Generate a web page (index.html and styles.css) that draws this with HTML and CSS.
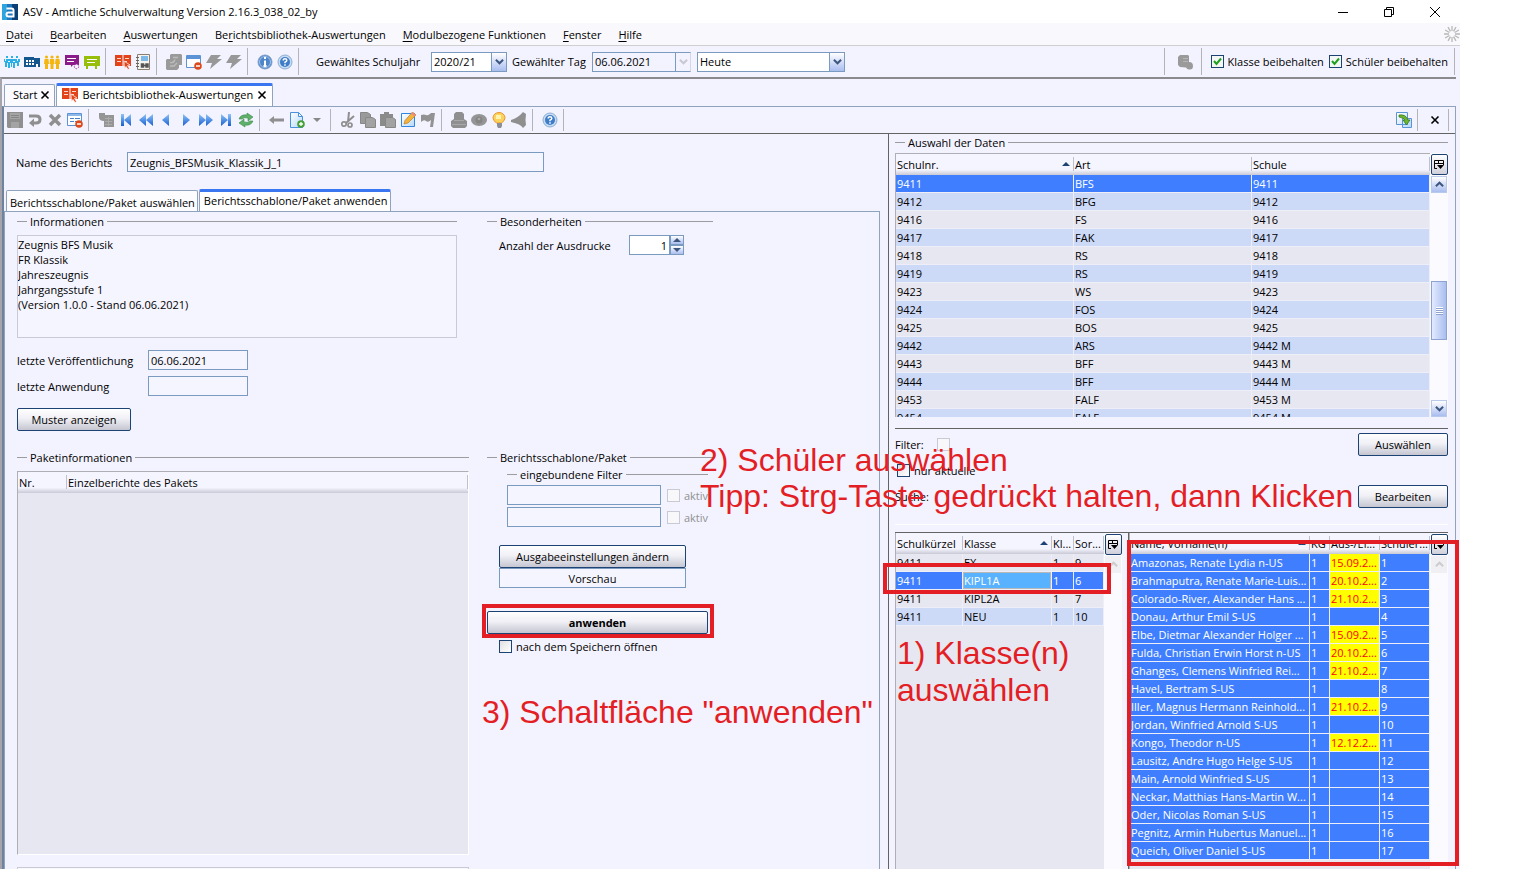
FILE: index.html
```html
<!DOCTYPE html>
<html lang="de">
<head>
<meta charset="utf-8">
<title>ASV - Amtliche Schulverwaltung</title>
<link rel="stylesheet" href="styles.css">
</head>
<body>
<svg class="defs" aria-hidden="true">
  <defs>
    <linearGradient id="gb" x1="0" y1="0" x2="0" y2="1"><stop offset="0" stop-color="#8cc4f8"/><stop offset="1" stop-color="#1b5fd0"/></linearGradient>
    <linearGradient id="gp" x1="0" y1="0" x2="1" y2="1"><stop offset="0" stop-color="#ffffff"/><stop offset="1" stop-color="#b5d8fb"/></linearGradient>
    <symbol id="logo" viewBox="0 0 16 16"><path fill="#0a3f78" d="M0 0h16v16H0z"/><path fill="#2fa5e0" d="M0 0h5v16H0z"/><path fill="#1d78bd" d="M5 0h5v16H5z"/><path fill="none" stroke="#fff" stroke-width="2" d="M4.500 4.500h5q2 0 2 2v6H6.500q-2 0-2-2t2-2h5"/></symbol>
    <symbol id="people" viewBox="0 0 16 16"><g fill="#2bb0e6"><path d="M2 2h2v2H2zM7 2h2v2H7zM12 2h2v2h-2zM4 5h2v2H4zM9 5h2v2H9zM0 5h1v2h1V5h2v4H3v4H1V8H0zM6 5h3v4H8v4H7V9H6zM11 5h2v2h1V5h2v3h-1v4h-2V9h-2zM4 8h2v6H4zM9 8h2v6H9z"/></g></symbol>
    <symbol id="school" viewBox="0 0 16 16"><path fill="#14578f" d="M0 3h10v1h6v9H0z"/><path fill="#fff" d="M2 6h2v2H2zM5 6h2v2H5zM8 6h2v2H8zM2 9h2v2H2zM5 9h2v2H5zM8 9h2v2H8zM12 10h2v3h-2z"/></symbol>
    <symbol id="adults" viewBox="0 0 16 16"><g fill="#f5b70f"><circle cx="2.500" cy="3" r="1.600"/><circle cx="8" cy="3" r="1.600"/><circle cx="13.500" cy="3" r="1.600"/><path d="M.5 5h4l.5 5H4v5H1v-5H0zM6 5h4l.5 5h-1v5h-3v-5h-1zM11.500 5h4l.5 5h-1v5h-3v-5h-1z"/></g></symbol>
    <symbol id="board1" viewBox="0 0 16 16"><path fill="#8b1a8b" d="M1 1h14v10H9l-2 2v-2H1z"/><path stroke="#fff" d="M3 4.500h9M3 7.500h7"/><circle cx="12.500" cy="12.500" r="2.200" fill="#f3f3ff" stroke="#a83ba8" stroke-dasharray="1.500 1"/></symbol>
    <symbol id="board2" viewBox="0 0 16 16"><path fill="#98be0c" d="M0 2h16v10H0zM2 12h2v3H2zM11 12h2v3h-2z"/><path stroke="#fff" d="M3 5.500h10M3 8.500h8"/></symbol>
    <symbol id="book" viewBox="0 0 16 16"><path fill="#e2431b" d="M0 1h7.500v11H0zM8.500 1H16v11H8.500z"/><path stroke="#ffd9cc" d="M2 4.500h4M2 7.500h4M10 4.500h4M10 7.500h2"/><path fill="#e2431b" stroke="#fff" stroke-width=".7" d="m9 7 6 4-2.500.500 2 3-1.500 1-2-3-1.500 2z"/></symbol>
    <symbol id="binder" viewBox="0 0 16 16"><path fill="#f5f3ee" stroke="#8a7e70" d="M2.500.5h12v15h-12z"/><path stroke="#666" d="M1 3.500h3M1 6.500h3M1 9.500h3M1 12.500h3"/><path fill="#7cb8e8" d="M6 2h7v5H6z"/><path stroke="#555" fill="none" stroke-width="1.500" d="M6 11.500h7M6.500 10v3h2v-3zM11 10v3h2v-3z"/></symbol>
    <symbol id="folder" viewBox="0 0 16 16"><path fill="#9a9a9a" d="M5 0h10l1 1v10h-3v3l-2 2H1l-1-1V6l1-1h3V1z"/><path fill="none" stroke="#bcbcbc" stroke-width="1.300" d="M4 8.500q4 1 5-3M4 12h4l3-3M7 3.500h5"/></symbol>
    <symbol id="winminus" viewBox="0 0 16 16"><path fill="#fff" stroke="#5b93d6" d="M.5 1.500h14v12H.5z"/><path fill="#5b93d6" d="M1 2h13v3H1z"/><circle cx="12" cy="12" r="3.800" fill="#dc4a1c"/><path stroke="#fff" stroke-width="1.500" d="M10 12h4"/></symbol>
    <symbol id="formminus" viewBox="0 0 16 16"><path fill="#fff" stroke="#5b93d6" d="M.5 1.500h14v12H.5z"/><path fill="#8db8e8" d="M1 2h13v2H1z"/><path stroke="#4a80c6" d="M3 6.500h4M8 6.500h5M3 9.500h4M8 9.500h3"/><circle cx="12" cy="12" r="3.800" fill="#dc4a1c"/><path stroke="#fff" stroke-width="1.500" d="M10 12h4"/></symbol>
    <symbol id="bolt" viewBox="0 0 16 16"><path fill="#989898" d="M5 1h10l-4 4h5L4 15l2-6H0z"/></symbol>
    <symbol id="info" viewBox="0 0 16 16"><circle cx="8" cy="8" r="7" fill="#4f86ca" stroke="#7f9fc4"/><circle cx="8" cy="8" r="5.500" fill="none" stroke="#9fc4ee"/><path stroke="#fff" stroke-width="2" d="M8 3v2M8 6.500v5M6.500 12h3"/></symbol>
    <symbol id="help" viewBox="0 0 16 16"><circle cx="8" cy="8" r="7" fill="#c6dcf2" stroke="#8eaed2"/><circle cx="8" cy="8" r="5" fill="#3f7cc8"/><path stroke="#fff" stroke-width="1.500" fill="none" d="M6.200 6.500q0-1.800 1.800-1.800t1.800 1.600Q9.800 7.500 8 8.200v1M8 10.300v1.500"/></symbol>
    <symbol id="server" viewBox="0 0 16 16"><path fill="#9a9a9a" d="M3 1h8l1 1v6q4 0 4 4t-4 3.500q-2 0-3-2l-6-.5-2-2V3z"/><path stroke="#b5b5b5" d="M6 4.500h5M6 7.500h5"/></symbol>
    <symbol id="save" viewBox="0 0 16 16"><path fill="#8f8f8f" d="M0 0h16v16H1l-1-1z"/><path fill="#a4a4a4" d="M3 1h10v6H3zM4 10h8v6H4z"/><path stroke="#858585" d="M4 3.500h8M4 5.500h8"/></symbol>
    <symbol id="undo" viewBox="0 0 16 16"><path fill="none" stroke="#8f8f8f" stroke-width="3" d="M2 4h7q4 0 4 3.500T9 11H5"/><path fill="#8f8f8f" d="M7 6.500V15l-5-4z"/></symbol>
    <symbol id="cross" viewBox="0 0 16 16"><path stroke="#8f8f8f" stroke-width="3.500" d="m3 3 10 10M13 3 3 13"/></symbol>
    <symbol id="multi" viewBox="0 0 16 16"><path fill="#959595" d="M1 1h6v2h9v12H6V9q-5 0-5-4z"/><path stroke="#ababab" d="M7 6.500h7M7 9.500h7M7 12.500h7M10.500 5v9"/></symbol>
    <symbol id="first" viewBox="0 0 16 16"><path fill="url(#gb)" d="M3 2h3v12H3zM13 2v12L6 8z"/></symbol>
    <symbol id="rew" viewBox="0 0 16 16"><path fill="url(#gb)" d="M8 2v12L1 8zM15 2v12L8 8z"/></symbol>
    <symbol id="prev" viewBox="0 0 16 16"><path fill="url(#gb)" d="M11 2v12L4 8z"/></symbol>
    <symbol id="arrowl" viewBox="0 0 16 16"><path fill="#909090" d="m0 8 5-4v2.500h10v3H5V12z"/></symbol>
    <symbol id="refresh" viewBox="0 0 16 16"><path fill="#5fb069" stroke="#3d8a4a" stroke-width=".6" d="M1 7q2-5 8-4V1l6 4-5 4V6Q6 5 4 7zM15 9q-2 5-8 4v2l-6-4 5-4v3q4 1 6-1z"/></symbol>
    <symbol id="newdoc" viewBox="0 0 16 16"><path fill="url(#gp)" stroke="#4a90dc" d="M1.500.5h8l4 4v11h-12z"/><path fill="#fff" stroke="#4a90dc" d="M9.500.5v4h4z"/><circle cx="12" cy="12" r="3.800" fill="#46a036"/><path stroke="#fff" stroke-width="1.300" d="M10 12h4M12 10v4"/></symbol>
    <symbol id="down" viewBox="0 0 16 16"><path fill="#888" d="M4 6h8l-4 4z"/></symbol>
    <symbol id="cut" viewBox="0 0 16 16"><path stroke="#8f8f8f" stroke-width="2" fill="none" d="M9 0 8 10M14 4 6 11"/><circle cx="4" cy="12" r="2.200" fill="none" stroke="#8f8f8f" stroke-width="1.700"/><circle cx="10" cy="13" r="2" fill="none" stroke="#8f8f8f" stroke-width="1.700"/></symbol>
    <symbol id="copy" viewBox="0 0 16 16"><path fill="#9a9a9a" stroke="#878787" d="M.5.5h7l3 2v9H.5z"/><path fill="#a2a2a2" stroke="#878787" d="M5.500 5.500h7l3 2v8h-10z"/></symbol>
    <symbol id="paste" viewBox="0 0 16 16"><path fill="#8b8b8b" d="M0 2h4V0h5v2h4v12H0z"/><path fill="#a2a2a2" stroke="#878787" d="M5.500 5.500h7l3 2v8h-10z"/></symbol>
    <symbol id="edit" viewBox="0 0 16 16"><path fill="url(#gp)" stroke="#2f86e0" d="M1.500 1.500h13v13h-13z"/><path fill="#f3b23a" stroke="#b07018" stroke-width=".6" d="m4 12 1-3.500L12.500 0 16 3 8 11z"/><path fill="#e88a80" d="m12.500 0 3.500 3-1.500 1.500L11 1.500z"/></symbol>
    <symbol id="flag" viewBox="0 0 16 16"><path fill="#929292" d="M1 3q3-1 5 0t5-2h4l-2 14h-3l1-7q-3 3-5 1T1 10z"/></symbol>
    <symbol id="print" viewBox="0 0 16 16"><path fill="#8f8f8f" d="M5 0h6l2 2v5l3 2v5l-2 2H2l-2-2V9l3-2V2z"/><path stroke="#a8a8a8" d="M3 8.500h10M1 12.500h14"/></symbol>
    <symbol id="eye" viewBox="0 0 16 16"><ellipse cx="8" cy="8" rx="8" ry="6" fill="#959595"/><circle cx="8" cy="8" r="3.500" fill="#858585"/><circle cx="8" cy="7" r="1.300" fill="#aaa"/></symbol>
    <symbol id="bulb" viewBox="0 0 16 16"><path fill="#fbd25b" stroke="#e8962e" d="M8 .5a6 5.200 0 0 1 6 5.200q0 3-3.500 5.300h-5Q2 8.700 2 5.700A6 5.200 0 0 1 8 .5z"/><path fill="#fff3b0" d="M5 3h5v4H5z"/><path fill="#8a8f98" d="M6 11h5v3l-1 2H7l-1-2z"/></symbol>
    <symbol id="bell" viewBox="0 0 16 16"><path fill="#8f8f8f" d="m12 0 3 2q-1 6 0 11l-3 3q-2-4-12-6V8q7-2 12-8z"/></symbol>
    <symbol id="swap" viewBox="0 0 16 16"><path fill="url(#gp)" stroke="#5a94d4" d="M.5.5h11v12H.5zM6.500 6.500h9v9h-9z"/><path fill="#6cb52a" stroke="#2f6f1c" stroke-width=".7" d="M3 3q7-1 9 5h2l-3.500 5L7 8h2Q8 6 3 5z"/></symbol>
    <symbol id="spin" viewBox="0 0 16 16"><path stroke="#b8b8b8" stroke-width="1.300" d="M8 0v5M8 11v5M0 8h5M11 8h5M4 1.100l2.500 4.300M9.500 10.600 12 14.900M1.100 4l4.300 2.500M10.600 9.500l4.300 2.500M12 1.100 9.500 5.400M6.500 10.600 4 14.900M14.900 4l-4.300 2.500M5.400 9.500 1.100 12"/></symbol>
    <symbol id="x" viewBox="0 0 10 10"><path stroke="#000" stroke-width="1.600" d="m1.500 1.500 7 7M8.500 1.500l-7 7"/></symbol>
    <symbol id="colsel" viewBox="0 0 10 10"><path fill="none" stroke="#000" d="M3 8.500H.5v-8h9V5M.5 3.500h9M4.500 0v4"/><path d="M3 5h7L6.500 9z"/></symbol>
    <symbol id="cu" viewBox="0 0 10 10"><path fill="none" stroke="currentColor" stroke-width="2.200" d="m1 7 4-4 4 4"/></symbol>
    <symbol id="cd" viewBox="0 0 10 10"><path fill="none" stroke="currentColor" stroke-width="2.200" d="m1 3 4 4 4-4"/></symbol>
    <symbol id="tri" viewBox="0 0 8 4"><path fill="currentColor" d="M0 4 4 0l4 4z"/></symbol>
    <symbol id="trid" viewBox="0 0 8 4"><path fill="currentColor" d="m0 0 4 4 4-4z"/></symbol>
  </defs>
</svg>

<div class="app">
  <header class="titlebar">
    <svg class="i"><use href="#logo"/></svg>
    <h1>ASV - Amtliche Schulverwaltung Version 2.16.3_038_02_by</h1>
    <div class="winbtns">
      <button aria-label="Minimieren"><svg viewBox="0 0 12 12"><path stroke="#000" d="M1 6.500h10"/></svg></button>
      <button aria-label="Wiederherstellen"><svg viewBox="0 0 12 12"><path fill="none" stroke="#000" d="M1.500 3.500h7v7h-7zM3.500 3.500v-2h7v7h-2"/></svg></button>
      <button aria-label="Schließen"><svg viewBox="0 0 12 12"><path stroke="#000" d="m1 1 10 10M11 1 1 11"/></svg></button>
    </div>
  </header>
  <nav class="menubar">
    <a href="#"><u>D</u>atei</a><a href="#"><u>B</u>earbeiten</a><a href="#"><u>A</u>uswertungen</a><a href="#">Be<u>r</u>ichtsbibliothek-Auswertungen</a><a href="#"><u>M</u>odulbezogene Funktionen</a><a href="#"><u>F</u>enster</a><a href="#"><u>H</u>ilfe</a>
    <svg class="i end"><use href="#spin"/></svg>
  </nav>
  <div class="toolbar main">
    <button aria-label="Schüler"><svg class="i"><use href="#people"/></svg></button>
    <button aria-label="Schule"><svg class="i"><use href="#school"/></svg></button>
    <button aria-label="Lehrkräfte"><svg class="i"><use href="#adults"/></svg></button>
    <button aria-label="Unterricht"><svg class="i"><use href="#board1"/></svg></button>
    <button aria-label="Klassen"><svg class="i"><use href="#board2"/></svg></button>
    <span class="sep"></span>
    <button aria-label="Berichte"><svg class="i"><use href="#book"/></svg></button>
    <button aria-label="Ordner"><svg class="i"><use href="#binder"/></svg></button>
    <span class="sep"></span>
    <button aria-label="Module"><svg class="i"><use href="#folder"/></svg></button>
    <button aria-label="Fenster schließen"><svg class="i"><use href="#winminus"/></svg></button>
    <button aria-label="Aktion 1"><svg class="i"><use href="#bolt"/></svg></button>
    <button aria-label="Aktion 2"><svg class="i"><use href="#bolt"/></svg></button>
    <span class="sep"></span>
    <button aria-label="Info"><svg class="i"><use href="#info"/></svg></button>
    <button aria-label="Hilfe"><svg class="i"><use href="#help"/></svg></button>
    <span class="sep"></span>
    <label class="yearlabel" for="year">Gewähltes Schuljahr</label>
    <span class="combo year"><select id="year"><option>2020/21</option></select><span class="arrow"><svg><use href="#cd"/></svg></span></span>
    <label class="daylabel" for="day">Gewählter Tag</label>
    <span class="combo day off"><input id="day" value="06.06.2021" readonly><span class="arrow"><svg><use href="#cd"/></svg></span></span>
    <span class="combo today"><select aria-label="Tag"><option>Heute</option></select><span class="arrow"><svg><use href="#cd"/></svg></span></span>
    <span class="grow"></span>
    <span class="sep"></span>
    <button aria-label="Server"><svg class="i"><use href="#server"/></svg></button>
    <span class="sep"></span>
    <label class="check"><input type="checkbox" checked>Klasse beibehalten</label>
    <label class="check"><input type="checkbox" checked>Schüler beibehalten</label>
    <span class="sep last"></span>
  </div>

  <div class="workspace">
    <div class="tabs">
      <div class="tab"><a href="#">Start</a><button aria-label="Start schließen"><svg class="x"><use href="#x"/></svg></button></div>
      <div class="tab active"><svg class="i"><use href="#book"/></svg><a href="#">Berichtsbibliothek-Auswertungen</a><button aria-label="Auswertungen schließen"><svg class="x"><use href="#x"/></svg></button></div>
    </div>
    <div class="module">
      <div class="toolbar sub">
        <button aria-label="Speichern"><svg class="i"><use href="#save"/></svg></button>
        <button aria-label="Rückgängig"><svg class="i"><use href="#undo"/></svg></button>
        <button aria-label="Löschen"><svg class="i"><use href="#cross"/></svg></button>
        <button aria-label="Formular schließen"><svg class="i"><use href="#formminus"/></svg></button>
        <span class="sep"></span>
        <button aria-label="Mehrfach"><svg class="i"><use href="#multi"/></svg></button>
        <button aria-label="Erster"><svg class="i"><use href="#first"/></svg></button>
        <button aria-label="Zurückspulen"><svg class="i"><use href="#rew"/></svg></button>
        <button aria-label="Vorheriger"><svg class="i"><use href="#prev"/></svg></button>
        <button aria-label="Nächster"><svg class="i flip"><use href="#prev"/></svg></button>
        <button aria-label="Vorspulen"><svg class="i flip"><use href="#rew"/></svg></button>
        <button aria-label="Letzter"><svg class="i flip"><use href="#first"/></svg></button>
        <button aria-label="Aktualisieren"><svg class="i"><use href="#refresh"/></svg></button>
        <span class="sep"></span>
        <button aria-label="Zurück"><svg class="i"><use href="#arrowl"/></svg></button>
        <button aria-label="Neu"><svg class="i"><use href="#newdoc"/></svg></button>
        <button aria-label="Neu Optionen"><svg class="i"><use href="#down"/></svg></button>
        <span class="sep"></span>
        <button aria-label="Ausschneiden"><svg class="i"><use href="#cut"/></svg></button>
        <button aria-label="Kopieren"><svg class="i"><use href="#copy"/></svg></button>
        <button aria-label="Einfügen"><svg class="i"><use href="#paste"/></svg></button>
        <button aria-label="Bearbeiten"><svg class="i"><use href="#edit"/></svg></button>
        <button aria-label="Markieren"><svg class="i"><use href="#flag"/></svg></button>
        <span class="sep"></span>
        <button aria-label="Drucken"><svg class="i"><use href="#print"/></svg></button>
        <button aria-label="Ansicht"><svg class="i"><use href="#eye"/></svg></button>
        <button aria-label="Tipp"><svg class="i"><use href="#bulb"/></svg></button>
        <button aria-label="Hinweis"><svg class="i"><use href="#bell"/></svg></button>
        <span class="sep"></span>
        <button aria-label="Hilfe"><svg class="i"><use href="#help"/></svg></button>
        <span class="sep"></span>
        <span class="grow"></span>
        <button aria-label="Tauschen"><svg class="i"><use href="#swap"/></svg></button>
        <span class="sep"></span>
        <button aria-label="Modul schließen"><svg class="x"><use href="#x"/></svg></button>
        <span class="sep last"></span>
      </div>

      <div class="split">
        <main class="left">
          <div class="namerow"><label for="rname">Name des Berichts</label><input id="rname" value="Zeugnis_BFSMusik_Klassik_J_1" readonly></div>
          <div class="subtabs"><button>Berichtsschablone/Paket auswählen</button><button class="active">Berichtsschablone/Paket anwenden</button></div>
          <div class="panel">
            <section class="infos">
              <h2 class="legend">Informationen</h2>
              <textarea aria-label="Informationen" readonly>Zeugnis BFS Musik
FR Klassik
Jahreszeugnis
Jahrgangsstufe 1
(Version 1.0.0 - Stand 06.06.2021)</textarea>
              <div class="daterow"><label for="pub">letzte Veröffentlichung</label><input id="pub" value="06.06.2021" readonly></div>
              <div class="daterow"><label for="use">letzte Anwendung</label><input id="use" readonly></div>
              <button class="btn sample">Muster anzeigen</button>
            </section>
            <section>
              <h2 class="legend">Besonderheiten</h2>
              <div class="copies"><label for="cnt">Anzahl der Ausdrucke</label><input id="cnt" value="1"><span class="spin"><button aria-label="Mehr"><svg><use href="#tri"/></svg></button><button aria-label="Weniger"><svg><use href="#trid"/></svg></button></span></div>
            </section>
            <section class="packet">
              <h2 class="legend">Paketinformationen</h2>
              <div class="ptable">
                <table><colgroup><col class="c49"><col></colgroup><thead><tr><th>Nr.</th><th>Einzelberichte des Pakets</th></tr></thead></table>
              </div>
              <div class="lower"></div>
            </section>
            <section class="apply">
              <h2 class="legend">Berichtsschablone/Paket</h2>
              <div class="filters">
                <h3 class="legend">eingebundene Filter</h3>
                <div class="frow"><input aria-label="Filter 1" readonly><label class="check off"><input type="checkbox" disabled>aktiv</label></div>
                <div class="frow"><input aria-label="Filter 2" readonly><label class="check off"><input type="checkbox" disabled>aktiv</label></div>
              </div>
              <div class="output"><button class="btn">Ausgabeeinstellungen ändern</button><input aria-label="Ausgabe" value="Vorschau" readonly></div>
              <div class="applyrow"><button class="btn strong">anwenden</button><span class="ring"></span></div>
              <label class="check open"><input type="checkbox">nach dem Speichern öffnen</label>
              <p class="note n3">3) Schaltfläche "anwenden"</p>
            </section>
          </div>
        </main>

        <aside class="right">
          <h2 class="legend">Auswahl der Daten</h2>
          <div class="grid schools">
            <div class="cells">
              <table>
                <thead><tr><th>Schulnr.<svg class="sort"><use href="#tri"/></svg></th><th>Art</th><th>Schule</th></tr></thead>
                <tbody>
                  <tr class="sel"><td>9411</td><td>BFS</td><td>9411</td></tr>
                  <tr><td>9412</td><td>BFG</td><td>9412</td></tr>
                  <tr><td>9416</td><td>FS</td><td>9416</td></tr>
                  <tr><td>9417</td><td>FAK</td><td>9417</td></tr>
                  <tr><td>9418</td><td>RS</td><td>9418</td></tr>
                  <tr><td>9419</td><td>RS</td><td>9419</td></tr>
                  <tr><td>9423</td><td>WS</td><td>9423</td></tr>
                  <tr><td>9424</td><td>FOS</td><td>9424</td></tr>
                  <tr><td>9425</td><td>BOS</td><td>9425</td></tr>
                  <tr><td>9442</td><td>ARS</td><td>9442 M</td></tr>
                  <tr><td>9443</td><td>BFF</td><td>9443 M</td></tr>
                  <tr><td>9444</td><td>BFF</td><td>9444 M</td></tr>
                  <tr><td>9453</td><td>FALF</td><td>9453 M</td></tr>
                  <tr><td>9454</td><td>FALF</td><td>9454 M</td></tr>
                </tbody>
              </table>
            </div>
            <div class="scroll">
              <button class="colbtn" aria-label="Spalten"><svg><use href="#colsel"/></svg></button>
              <button class="sbtn" aria-label="Nach oben"><svg><use href="#cu"/></svg></button>
              <span class="track"><span class="thumb"></span></span>
              <button class="sbtn" aria-label="Nach unten"><svg><use href="#cd"/></svg></button>
            </div>
          </div>
          <div class="find">
            <div class="findrow"><span class="cap">Filter:</span><input type="checkbox" aria-label="Filter" disabled><button class="btn">Auswählen</button></div>
            <div class="findrow"><label class="check"><input type="checkbox">nur aktuelle</label></div>
            <div class="findrow"><span class="cap">Suche:</span><button class="btn">Bearbeiten</button></div>
            <p class="note n2">2) Schüler auswählen<br>Tipp: Strg-Taste gedrückt halten, dann Klicken</p>
          </div>
          <div class="lists">
            <div class="grid classes">
              <div class="cells">
                <table>
                  <colgroup><col class="c67"><col><col class="c22"><col class="c30"></colgroup>
                  <thead><tr><th>Schulkürzel</th><th>Klasse<svg class="sort"><use href="#tri"/></svg></th><th>Kl...</th><th>Sor...</th></tr></thead>
                  <tbody>
                    <tr><td>9411</td><td>EX</td><td>1</td><td>9</td></tr>
                    <tr class="sel"><td>9411</td><td class="cur">KIPL1A</td><td>1</td><td>6</td></tr>
                    <tr><td>9411</td><td>KIPL2A</td><td>1</td><td>7</td></tr>
                    <tr><td>9411</td><td>NEU</td><td>1</td><td>10</td></tr>
                  </tbody>
                </table>
              </div>
              <div class="scroll"><button class="colbtn" aria-label="Spalten"><svg><use href="#colsel"/></svg></button><button class="sbtn off" aria-label="Nach oben" disabled><svg><use href="#cu"/></svg></button></div>
              <span class="ring"></span>
              <p class="note n1">1) Klasse(n)<br>auswählen</p>
            </div>
            <div class="grid pupils">
              <div class="cells">
                <table>
                  <colgroup><col><col class="c20"><col class="c50"><col class="c50"></colgroup>
                  <thead><tr><th>Name, Vorname(n)<svg class="sort"><use href="#tri"/></svg></th><th>KG</th><th>Aus-/Ei...</th><th>Schüler...</th></tr></thead>
                  <tbody>
                    <tr><td>Amazonas, Renate Lydia n-US</td><td>1</td><td class="y">15.09.2...</td><td>1</td></tr>
                    <tr><td>Brahmaputra, Renate Marie-Luis...</td><td>1</td><td class="y">20.10.2...</td><td>2</td></tr>
                    <tr><td>Colorado-River, Alexander Hans ...</td><td>1</td><td class="y">21.10.2...</td><td>3</td></tr>
                    <tr><td>Donau, Arthur Emil S-US</td><td>1</td><td></td><td>4</td></tr>
                    <tr><td>Elbe, Dietmar Alexander Holger ...</td><td>1</td><td class="y">15.09.2...</td><td>5</td></tr>
                    <tr><td>Fulda, Christian Erwin Horst n-US</td><td>1</td><td class="y">20.10.2...</td><td>6</td></tr>
                    <tr><td>Ghanges, Clemens Winfried Rei...</td><td>1</td><td class="y">21.10.2...</td><td>7</td></tr>
                    <tr><td>Havel, Bertram S-US</td><td>1</td><td></td><td>8</td></tr>
                    <tr><td>Iller, Magnus Hermann Reinhold...</td><td>1</td><td class="y">21.10.2...</td><td>9</td></tr>
                    <tr><td>Jordan, Winfried Arnold S-US</td><td>1</td><td></td><td>10</td></tr>
                    <tr><td>Kongo, Theodor n-US</td><td>1</td><td class="y">12.12.2...</td><td>11</td></tr>
                    <tr><td>Lausitz, Andre Hugo Helge S-US</td><td>1</td><td></td><td>12</td></tr>
                    <tr><td>Main, Arnold Winfried S-US</td><td>1</td><td></td><td>13</td></tr>
                    <tr><td>Neckar, Matthias Hans-Martin W...</td><td>1</td><td></td><td>14</td></tr>
                    <tr><td>Oder, Nicolas Roman S-US</td><td>1</td><td></td><td>15</td></tr>
                    <tr><td>Pegnitz, Armin Hubertus Manuel...</td><td>1</td><td></td><td>16</td></tr>
                    <tr><td>Queich, Oliver Daniel S-US</td><td>1</td><td></td><td>17</td></tr>
                  </tbody>
                </table>
              </div>
              <div class="scroll"><button class="colbtn" aria-label="Spalten"><svg><use href="#colsel"/></svg></button><button class="sbtn off" aria-label="Nach oben" disabled><svg><use href="#cu"/></svg></button></div>
              <span class="ring"></span>
            </div>
          </div>
        </aside>
      </div>
    </div>
  </div>
</div>
</body>
</html>
```
FILE: styles.css
```css
* { box-sizing: border-box; }
body {
  margin: 0;
  padding-right: 59px;
  background: #fff;
  color: #000;
  font: 11px/15px "Open Sans", "Noto Sans", sans-serif;
}
.defs { position: absolute; width: 0; height: 0; }
h1, h2, h3, p { margin: 0; font-size: inherit; font-weight: normal; }
a { color: inherit; text-decoration: none; }
button, input, select, textarea { font: inherit; color: inherit; margin: 0; padding: 0; border-radius: 0; }
button { background: none; border: 0; }
.i { display: block; width: 16px; height: 16px; flex: none; }
.x { display: block; width: 10px; height: 10px; }
.flip { transform: scaleX(-1); }
.grow { flex: 1; }

.app { display: flex; flex-direction: column; height: 100vh; overflow: hidden; background: #f3f3ff; }
.titlebar { display: flex; align-items: center; height: 23px; padding-left: 2px; gap: 5px; background: #fff; flex: none; }
.winbtns { display: flex; margin-left: auto; padding-right: 2px; }
.winbtns button { width: 46px; height: 20px; display: grid; place-items: center; }
.winbtns svg { width: 12px; height: 12px; }
.menubar { display: flex; align-items: center; gap: 17px; height: 23px; padding-left: 6px; background: #f9f9fd; border-bottom: 1px solid #cfcfcf; flex: none; }
.menubar .end { margin-left: auto; }
.menubar u { text-underline-offset: 2px; }

.toolbar { display: flex; align-items: center; flex: none; }
.toolbar > button { width: 20px; height: 22px; display: grid; place-items: center; flex: none; }
.sep { width: 1px; height: 27px; background: #b4b4b8; margin: 0 7px 0 3px; flex: none; }
.main { height: 31px; padding-left: 2px; }
.main .sep.last { margin: 0 5px 0 6px; }
.main .check + .check { margin-left: 5px; }
.main .sep + .check { margin-left: 2px; }
.main .grow + .sep { margin-right: 10px; }
.main .sep:has(+ .check) { margin-left: 6px; }
.sub { height: 27px; padding-left: 1px; border-bottom: 1px solid #636363; }
.sub .sep { height: 22px; }
.sub .sep.last { margin: 0 6px 0 3px; }

.combo { display: flex; height: 20px; border: 1px solid #7b9ac0; background: #fff; position: relative; }
.combo select, .combo input { appearance: none; border: 0; background: transparent; width: 100%; padding: 0 2px; outline: 0; }
.arrow { position: absolute; right: 0; top: 0; width: 15px; height: 18px; display: grid; place-items: center; color: #3c567f; background: linear-gradient(#fff, #a9bdf0); border-left: 1px solid #7b9ac0; pointer-events: none; }
.arrow svg { width: 9px; height: 9px; }
.year { width: 76px; }
.yearlabel { width: 115px; margin-left: 10px; }
.daylabel { width: 80px; margin-left: 5px; }
.day { width: 99px; background: #f3f3ff; border-right-color: #d6d6e4; }
.day .arrow { background: #f3f3ff; color: #c8c8d4; }
.today { width: 148px; margin-left: 6px; }

.check { display: inline-flex; align-items: center; gap: 4px; white-space: nowrap; }
input[type=checkbox] { appearance: none; width: 13px; height: 13px; border: 1px solid #1c4373; background: linear-gradient(135deg, #e0e0e4, #fff); flex: none; }
input[type=checkbox]:checked { background: url("data:image/svg+xml,%3Csvg xmlns='http://www.w3.org/2000/svg' viewBox='0 0 11 11'%3E%3Cpath fill='none' stroke='%231fa01f' stroke-width='2' d='m2 5 2.500 3L9 2.500'/%3E%3C/svg%3E") #f4f7f4; }
input[type=checkbox]:disabled { border-color: #cacad4; background: #f8f8fa; }
.check.off { color: #909090; }

.workspace { flex: 1; min-height: 0; display: flex; flex-direction: column; border-top: 2px solid #8a8a8e; border-left: 2px solid #a4a4aa; margin-right: 4px; padding-top: 4px; }
.tabs { display: flex; align-items: flex-end; gap: 1px; padding-left: 2px; flex: none; }
.tab { display: flex; align-items: center; height: 22px; gap: 3px; padding: 0 4px 2px 8px; background: #fbfbff; border: 1px solid #8fa3bd; border-bottom: 0; border-radius: 2px 2px 0 0; }
.tab.active { height: 23px; padding: 0 5px 3px; background: #fff; border-top: 3px solid #3a76f0; gap: 4px; }
.module { flex: 1; min-height: 0; display: flex; flex-direction: column; border: 1px solid #8fa3bd; border-left: 2px solid #6f839f; border-bottom: 0; }
.split { flex: 1; min-height: 0; display: flex; }

.left { flex: 1; min-width: 0; display: flex; flex-direction: column; padding-right: 8px; }
.namerow { display: flex; align-items: center; padding: 18px 0 17px 12px; }
.namerow label { width: 111px; }
input:not([type=checkbox]) { outline: 0; }
.namerow input, .daterow input, .frow > input, .output input, .copies input { height: 20px; border: 1px solid #7b9ac0; background: #f5f5ff; padding: 0 2px; }
.namerow input { width: 417px; }
.subtabs { display: flex; align-items: flex-end; gap: 1px; padding-left: 2px; }
.subtabs button { height: 21px; padding: 2px 2px 0 3px; background: #fcfcff; border: 1px solid #8fa3bd; border-bottom: 0; border-radius: 2px 2px 0 0; white-space: nowrap; }
.subtabs .active { height: 22px; padding: 0 3px 2px 4px; background: #fff; border-top: 3px solid #3a76f0; }
.panel { flex: 1; min-height: 0; display: grid; grid-template-columns: 452px 226px; column-gap: 18px; align-content: start; padding: 0 0 0 12px; border: 1px solid #8fa3bd; border-bottom: 0; }
.legend { display: flex; align-items: center; gap: 3px; height: 18px; white-space: nowrap; }
.legend::before { content: ""; width: 10px; height: 1px; background: #9c9ca0; }
.legend::after { content: ""; flex: 1; height: 1px; background: #9c9ca0; }
.infos { padding: 0 12px 17px 0; }
.infos textarea { display: block; width: 100%; height: 103px; margin: 5px 0 12px; border: 1px solid #cacad6; background: #f5f5ff; resize: none; outline: 0; padding-top: 1px; line-height: 15px; }
.daterow { display: flex; align-items: center; margin-bottom: 6px; }
.daterow label { width: 131px; }
.daterow input { width: 100px; }
.btn { height: 23px; border: 1px solid #1c4373; border-radius: 2px; background: linear-gradient(#fff, #f0f0f6 45%, #c6c6d2); }
.sample { width: 114px; margin-top: 6px; }
.copies { display: flex; align-items: center; padding: 5px 0 0 12px; }
.copies label { width: 130px; }
.copies input { width: 41px; text-align: right; background: #fff; }
.spin { display: grid; gap: 0; width: 14px; height: 20px; }
.spin button { display: grid; place-items: center; border: 1px solid #7b9ac0; background: linear-gradient(#fff, #a9bdf0); color: #3c567f; }
.spin svg { width: 8px; height: 4px; }

table { width: 100%; border-collapse: separate; border-spacing: 0; table-layout: fixed; }
th { height: 21px; padding: 0 1px; text-align: left; font-weight: normal; white-space: nowrap; overflow: hidden; position: relative; background: linear-gradient(90deg, transparent calc(100% - 1px), #c0c0ca 0) 0 3px / 100% 14px no-repeat, linear-gradient(#f5f5ff 75%, #c9c9d6); }
td { height: 18px; padding: 0 1px; border-right: 1px solid #eeeef8; border-bottom: 1px solid #eeeef8; white-space: nowrap; overflow: hidden; line-height: 17px; }
tbody tr:nth-child(even) { background: #cddaf7; }
.sel, .pupils tbody tr, .pupils tbody tr:nth-child(even), tbody .sel:nth-child(even) { background: #3f7fff; color: #fff; }
.sort { position: absolute; right: 4px; top: 8px; width: 8px; height: 4px; color: #1c4373; }
.cur { background: #59b2ff; box-shadow: inset 0 0 0 1px #b8b8b8; }
.y { background: #ff0; color: #f00; }
.c49 { width: 49px; } .c67 { width: 67px; } .c22 { width: 22px; } .c30 { width: 30px; } .c20 { width: 20px; } .c50 { width: 50px; }
.ptable { margin-top: 5px; height: 384px; background: #e7e7f1; border: 1px solid #fff; border-top-color: #aeaeb4; border-left-color: #aeaeb4; }
.lower { margin-top: 12px; height: 60px; border: 1px solid #cacad6; background: #f8f8ff; }

.filters { padding: 0 5px 0 20px; }
.filters .legend { height: 16px; margin-bottom: 3px; }
.frow { display: flex; gap: 6px; margin-bottom: 2px; }
.frow > input { width: 154px; }
.output { padding: 16px 27px 0 12px; display: grid; }
.output input { text-align: center; min-width: 0; }
.applyrow { position: relative; margin-top: 23px; padding-right: 5px; display: grid; }
.strong { font-weight: bold; }
.ring { position: absolute; border: 4px solid #e31e24; pointer-events: none; z-index: 2; }
.applyrow .ring { inset: -7px -1px -4px -5px; }
.open { margin: 5px 0 0 12px; }
.apply { position: relative; }
.note { position: absolute; z-index: 3; color: #e31e24; font: 32px/37px "Liberation Sans", Arial, sans-serif; white-space: nowrap; pointer-events: none; }
.n3 { left: -5px; top: 246px; }

.right { width: 567px; flex: none; display: flex; flex-direction: column; padding: 0 7px 0 6px; border-left: 1px solid #636363; }
.right > .legend { height: 16px; margin-bottom: 3px; }
.grid { display: flex; position: relative; min-width: 0; }
.cells { flex: 1; min-width: 0; overflow: hidden; background: #e7e7f1; border-top: 1px solid #aeaeb4; border-left: 1px solid #aeaeb4; }
.schools { height: 264px; flex: none; }
.scroll { width: 18px; flex: none; display: flex; flex-direction: column; align-items: center; gap: 1px; background: #fbfbff; padding-top: 1px; }
.colbtn { width: 17px; height: 21px; border: 1px solid #1c4373; border-radius: 2px; background: linear-gradient(#fff, #d0d0dc); display: grid; place-items: center; flex: none; }
.colbtn svg { width: 10px; height: 10px; }
.sbtn { width: 16px; height: 17px; border: 1px solid #b9c9ec; background: linear-gradient(#fff, #a9bdf0); color: #3c567f; display: grid; place-items: center; flex: none; }
.sbtn svg { width: 9px; height: 9px; }
.sbtn.off { border-color: #f0f0f4; background: #f0f0f4; color: #ccc; }
.track { flex: 1; width: 16px; padding-top: 87px; }
.thumb { display: block; height: 59px; border: 1px solid #8fa3d0; background: repeating-linear-gradient(#fff 0 1px, #8fa3d0 1px 2px) center / 7px 8px no-repeat, linear-gradient(90deg, #e4ebff, #a9bdf0); }
.find { position: relative; margin-top: 11px; padding: 2px 0 15px; border-top: 1px solid #636363; border-bottom: 1px solid #fff; }
.findrow { display: flex; align-items: center; height: 26px; }
.findrow .cap { width: 42px; }
.findrow .btn { width: 90px; margin-left: auto; }
.findrow .check { padding-left: 2px; }
.n2 { left: -195px; top: 13px; line-height: 36px; }
.lists { flex: 1; min-height: 0; margin-top: 7px; display: grid; grid-template-columns: 227px 1fr; column-gap: 6px; border-top: 1px solid #636363; }
.lists .cells, .lists .scroll { border-top: 0; }
.classes .ring { left: -12px; top: 30px; width: 228px; height: 31px; }
.n1 { left: 2px; top: 102px; }
.pupils { border-left: 1px solid #636363; }
.pupils .ring { left: -2px; top: 7px; width: 332px; height: 326px; }
```
